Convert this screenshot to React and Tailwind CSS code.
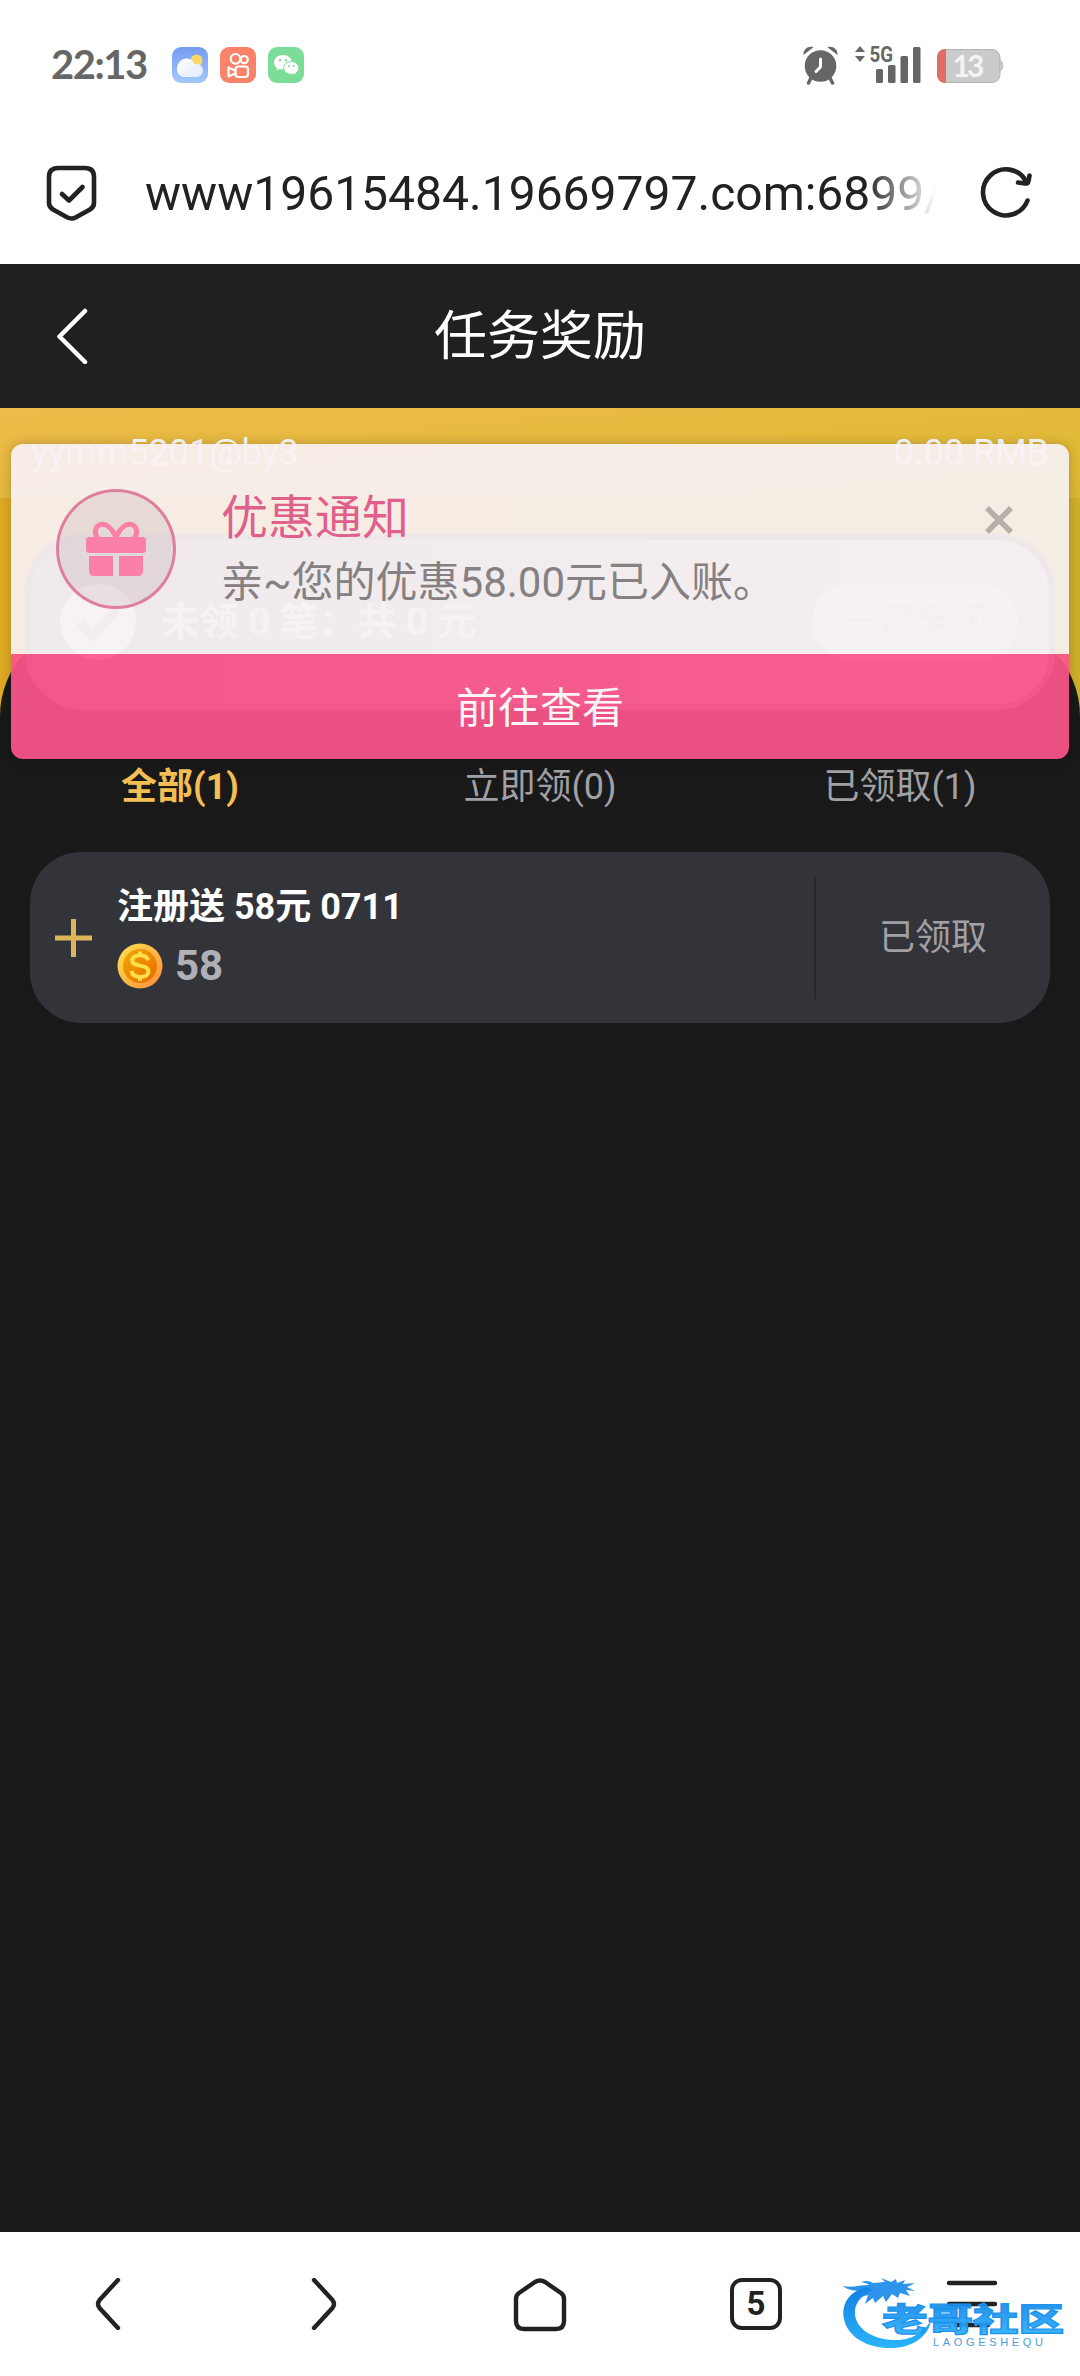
import React from "react";

function StatusBar() {
  return (
    <div className="flex h-[132px] items-start pl-[51px] pr-[76px] text-[#666]">
      <div className="mt-[39px] w-[121px] whitespace-nowrap font-['Lato'] text-[40px] font-bold leading-[50px] tracking-[-1.5px]">22:13</div>
      <div className="mt-[47px] flex gap-3">
        <svg width="36" height="36" viewBox="0 0 36 36">
          <defs>
            <linearGradient id="sky" x1="0" y1="0" x2="0" y2="1">
              <stop offset="0" stopColor="#759bf5" />
              <stop offset="1" stopColor="#a3c8f8" />
            </linearGradient>
            <linearGradient id="cloud" x1="0" y1="0" x2="1" y2="1">
              <stop offset="0" stopColor="#fff" />
              <stop offset="1" stopColor="#dfeafc" />
            </linearGradient>
          </defs>
          <rect width="36" height="36" rx="9" fill="url(#sky)" />
          <circle cx="24.5" cy="13.5" r="6" fill="#fbd565" />
          <path d="M12 30a7 7 0 0 1-7-7.500C5 15 10 11.500 14.500 11.500c4 0 6.800 2.200 8 5.500H25a6 6.500 0 0 1 0 13Z" fill="url(#cloud)" />
        </svg>
        <svg width="36" height="36" viewBox="0 0 36 36" fill="none" stroke="#fff" strokeWidth="2.200">
          <rect width="36" height="36" rx="9" fill="#fa8268" stroke="none" />
          <circle cx="15.500" cy="11.800" r="4.800" />
          <circle cx="24.200" cy="12.600" r="3.600" />
          <rect x="15.500" y="19.500" width="12.500" height="10.500" rx="3" />
          <path d="M15 23.500 8.500 20.500v9L15 26.500" strokeLinejoin="round" />
        </svg>
        <svg width="36" height="36" viewBox="0 0 36 36">
          <rect width="36" height="36" rx="9" fill="#7bdd98" />
          <path d="M15 8c-5 0-9 3.200-9 7.400 0 2.300 1.300 4.200 3.200 5.500l-.8 2.600 3.200-1.500c1.100.3 2.200.5 3.400.5 5 0 8.800-3.200 8.800-7.100S20 8 15 8Z" fill="#fff" />
          <path d="M23.300 14.600c-4.300 0-7.600 2.800-7.600 6.400s3.300 6.400 7.600 6.400c.9 0 1.800-.1 2.600-.4l2.500 1.300-.6-2.300c1.900-1.200 3-3 3-5 0-3.600-3.200-6.400-7.500-6.400Z" fill="#fff" stroke="#7bdd98" strokeWidth="1" />
          <g fill="#7bdd98">
            <circle cx="12" cy="13.200" r="1.200" />
            <circle cx="18" cy="13.200" r="1.200" />
            <circle cx="20.700" cy="19" r="1" />
            <circle cx="25.700" cy="19" r="1" />
          </g>
        </svg>
      </div>
      <div className="ml-auto mt-[46px] flex">
        <svg width="38" height="39" viewBox="0 0 38 39" fill="#666">
          <circle cx="18.500" cy="20" r="15.800" />
          <path d="M1.500 9C1 4 5.500-.5 11.500 1.200Z M35.500 9C36 4 31.500-.5 25.500 1.200Z" />
          <path d="m9 32-2.500 5M28 32l2.500 5" stroke="#666" strokeWidth="3.500" strokeLinecap="round" />
          <path d="M18.500 13v8l-4.500 4.500" fill="none" stroke="#fff" strokeWidth="3" strokeLinecap="round" strokeLinejoin="round" />
        </svg>
        <svg className="ml-[14px] overflow-visible" width="68" height="38" viewBox="0 0 68 38" fill="#666">
          <path d="M1 6 6 0l5 6ZM1 10h10l-5 6Z" />
          <rect x="22" y="23" width="7" height="14" rx="1.500" />
          <rect x="34" y="19" width="7.500" height="18" rx="1.500" />
          <rect x="46.500" y="10" width="7.500" height="27" rx="1.500" />
          <rect x="59" y="1" width="7.500" height="36" rx="1.500" />
          <text x="15.500" y="16.200" fontFamily="Roboto" fontWeight="700" fontSize="22" textLength="23.500" lengthAdjust="spacingAndGlyphs">5G</text>
        </svg>
        <svg className="ml-[15px]" width="67" height="38" viewBox="0 0 67 38">
          <defs>
            <clipPath id="cell"><rect x="0" y="3" width="63.500" height="34" rx="8" /></clipPath>
          </defs>
          <rect x="0.500" y="3.500" width="62.500" height="33" rx="8" fill="#cbcbcb" stroke="#b2b2b2" />
          <path d="M63 14q3 1 3 5.500T63 25Z" fill="#cbcbcb" stroke="#b5b5b5" strokeWidth=".6" />
          <rect x="0" y="3" width="9" height="34" fill="#e16d66" clipPath="url(#cell)" />
          <text x="31.500" y="31" textAnchor="middle" fontFamily="Lato" fontWeight="700" fontSize="30" fill="#f4f4f4" textLength="32">13</text>
        </svg>
      </div>
    </div>
  );
}

function AddressBar() {
  return (
    <div className="flex h-[132px] items-center pb-[22px] pl-[46px] pr-[48px]">
      <svg className="mt-[12px]" width="51" height="56" viewBox="0 0 51 56" fill="none" stroke="#222" strokeWidth="4.600" strokeLinecap="round" strokeLinejoin="round">
        <path d="M12 3h27q9 0 9 9v26q0 4-4 6.500L30 52.300q-4.500 2.400-9 0L7 44.500Q3 42 3 38V12q0-9 9-9Z" />
        <path d="m16 29 7 6.500L36.500 22" />
      </svg>
      <div className="ml-[48px] mt-[13px] h-[60px] w-[791px] whitespace-nowrap font-['Roboto'] text-[48px] leading-[60px] text-[#222] [mask-image:linear-gradient(to_right,#000_91%,transparent_100%)]">
        www19615484.19669797.com:6899/
      </div>
      <svg className="ml-[44px] mt-[9px]" width="52" height="52" viewBox="0 0 52 52" fill="none" stroke="#222" strokeWidth="4.600" strokeLinecap="round" strokeLinejoin="round">
        <path d="M47.500 34.500A23 23 0 1 1 46 15" />
        <path d="M49.500 9.500 48.500 15q-.5 3-3.500 2.500L38 16.500" />
      </svg>
    </div>
  );
}

function Coin() {
  return (
    <svg width="46" height="46" viewBox="0 0 46 46">
      <defs>
        <linearGradient id="rim" x1="0" y1="0" x2="1" y2="1">
          <stop offset="0" stopColor="#ffe24d" />
          <stop offset="1" stopColor="#ff8d3c" />
        </linearGradient>
        <linearGradient id="face" x1="0" y1="0" x2="1" y2="1">
          <stop offset="0" stopColor="#f0a800" />
          <stop offset="1" stopColor="#ec6a00" />
        </linearGradient>
      </defs>
      <circle cx="23" cy="23" r="22.500" fill="url(#rim)" />
      <circle cx="23" cy="23" r="17" fill="url(#face)" />
      <path d="M31 17.500c-.6-3.500-3.800-5.300-8-5.300-4.500 0-7.800 2-7.800 5.200 0 3.600 3.500 4.400 7.800 5.200 4.600.9 8.400 1.900 8.400 5.800 0 3.500-3.600 5.500-8.400 5.500-4.600 0-8-2-8.500-5.800M23 8.500v3.700M23 34v3.700" fill="none" stroke="#ffe04a" strokeWidth="4" />
    </svg>
  );
}

function Notice() {
  return (
    <div className="absolute left-[11px] top-[180px] z-10 h-[315px] w-[1058px] overflow-hidden rounded-[12px] shadow-[0_0_12px_rgba(0,0,0,0.22)]">
      <div className="flex h-[210px] bg-[#f8f1f3]/93 pl-[45px] pr-[56px]">
        <div className="mt-[45px] flex size-[120px] items-center justify-center rounded-full border-3 border-[#dc6f95]/85 bg-[#b09090]/20">
          <svg width="60" height="56" viewBox="0 0 60 56" fill="#fa80a8">
            <rect x="0" y="16" width="60" height="16" rx="3.500" />
            <path d="M3 35h24v20H8q-5 0-5-5ZM33 35h24v15q0 5-5 5H33Z" />
            <path d="M30 16C25 6 21 3 16.500 3.200 8 3.700 8 13 12 17M30 16C35 6 39 3 43.500 3.200 52 3.700 52 13 48 17" fill="none" stroke="#fa80a8" strokeWidth="5" />
          </svg>
        </div>
        <div className="ml-[45px] mt-[42px]">
          <div className="text-[47px] leading-[64px] text-[#e0608c]">优惠通知</div>
          <div className="mt-px text-[42px] leading-[64px] text-[#858182]">亲~您的优惠58.00元已入账。</div>
        </div>
        <svg className="ml-auto mt-[62px]" width="28" height="28" viewBox="0 0 28 28" stroke="#b5afac" strokeWidth="5.500"><path d="m2 2 24 24M26 2 2 26" /></svg>
      </div>
      <div className="flex h-[105px] items-center justify-center bg-[#fb558b]/93 pt-[3px] text-[42px] text-white/95">前往查看</div>
    </div>
  );
}

function Summary() {
  return (
    <div className="mx-[25px] flex h-[176px] items-center rounded-[58px] border-[6px] border-[#6d6d6d] bg-linear-to-r from-[#8a888a] to-[#cfcbcc] pl-[29px] pr-[31px] font-bold">
      <svg width="76" height="76" viewBox="0 0 76 76"><circle cx="38" cy="38" r="38" fill="#f4f4f4" /><path d="m20 38 13 13 24-25" fill="none" stroke="#b4b0b0" strokeWidth="9" /></svg>
      <div className="ml-[25px] text-[39px] tracking-[-0.2px] text-[#f0f0f0]">未领 0 笔：共 0 元</div>
      <div className="ml-auto flex h-[76px] w-[206px] items-center justify-center rounded-full bg-[#f2f2f2] text-[36px] text-[#d4cfcf]">一键全领</div>
    </div>
  );
}

function Tabs() {
  return (
    <div className="mt-[41px] grid h-[72px] grid-cols-3 items-center text-center text-[36px] text-[#a0a0a5]">
      <div className="font-bold text-[#f3bf52]">全部(1)</div>
      <div>立即领(0)</div>
      <div>已领取(1)</div>
    </div>
  );
}

function Reward() {
  return (
    <div className="mx-[30px] mt-[29px] flex h-[171px] items-center rounded-[51px] bg-[#33343a]">
      <svg className="ml-[25px]" width="37" height="38" viewBox="0 0 37 38" stroke="#dcb45c" strokeWidth="5"><path d="M0 19h37M18.500 0v38" /></svg>
      <div className="ml-[25px] flex-1">
        <div className="text-[36px] font-bold leading-[48px] text-white">注册送 58元 0711</div>
        <div className="mt-[8px] flex h-[54px] items-center gap-[12px] text-[42px] font-bold text-[#b0b0b8]">
          <Coin />
          <span>58</span>
        </div>
      </div>
      <div className="flex h-[123px] w-[236px] items-center justify-center border-l-2 border-[#27282b] text-[36px] text-[#a0a0a5]">已领取</div>
    </div>
  );
}

// Dragon emblem followed by the community name
function Watermark() {
  return (
    <div className="absolute left-[836px] top-[38px] h-[90px] w-[234px]">
      <svg width="234" height="90" viewBox="0 0 234 90">
        <defs>
          <linearGradient id="water" x1="0" y1="0" x2="0" y2="1">
            <stop offset="0" stopColor="#0f7fe4" />
            <stop offset="1" stopColor="#2db4fa" />
          </linearGradient>
        </defs>
        <path d="M30 17C13 22 5 34 8 49c4 19 25 30 49 29 21-1 35-12 38-27-9 13-21 20-38 19-21-1-36-11-38-25C18 33 25 25 38 20Z" fill="url(#water)" />
        <path d="M7 16c9 2 16-1 26-1-2-2-5-2-8-3 5-2 9-1 12 1l12-1-4-4 10 4 5-3 1 4 8-3-2 4 12-1-8 4 8 4-9-1 4 6-10-3-2 5-6-4-6 8-3-6-8 7-2-5-8 6 3-9-7 2 2-5C20 20 12 21 7 16Z" fill="#1787e8" opacity=".9" />
        <text x="46" y="61" fontFamily="'Noto Sans CJK SC', sans-serif" fontWeight="900" fontSize="32" fill="url(#water)" fillOpacity=".92" stroke="#1c93ee" strokeWidth="1.200" textLength="182" lengthAdjust="spacingAndGlyphs">老哥社区</text>
        <text x="97" y="76" fontFamily="'Liberation Sans', sans-serif" fontSize="11" fill="#4a9dde" textLength="110">LAOGESHEQU</text>
      </svg>
    </div>
  );
}

function BrowserNav() {
  const stroke = { fill: "none", stroke: "#222", strokeWidth: 4.4, strokeLinecap: "round", strokeLinejoin: "round" };
  return (
    <div className="relative grid h-[144px] grid-cols-5 items-start justify-items-center bg-white pt-[46px]">
      <svg width="52" height="52" viewBox="0 0 52 52" {...stroke}><path d="M36 2 18 21.500q-4 4.500 0 9L36 50" /></svg>
      <svg width="52" height="52" viewBox="0 0 52 52" {...stroke}><path d="m16 2 18 19.500q4 4.500 0 9L16 50" /></svg>
      <svg width="54" height="54" viewBox="0 0 54 54" {...stroke}><path d="M3 21q0-4 3-6L22 4q5-3 10 0l16 11q3 2 3 6v22q0 8-8 8H11q-8 0-8-8Z" /></svg>
      <div className="flex size-[52px] items-center justify-center rounded-[12px] border-[4.500px] border-[#222] text-[33px] font-bold text-[#222]">5</div>
      <svg width="52" height="52" viewBox="0 0 52 52" {...stroke}><path d="M3 5h46M3 26h46M10 47h32" /></svg>
      <Watermark />
    </div>
  );
}

export default function App() {
  return (
    <div className="flex h-[2376px] w-[1080px] flex-col bg-white font-['Roboto','Noto_Sans_CJK_SC',sans-serif]">
      <StatusBar />
      <AddressBar />
      <main className="relative flex-1 overflow-hidden bg-[#191919]">
        <header className="grid h-[144px] grid-cols-3 items-center bg-[#202020] text-white">
          <svg className="ml-[56px]" width="32" height="56" viewBox="0 0 32 56" fill="none" stroke="#fff" strokeWidth="4.500" strokeLinecap="round" strokeLinejoin="round"><path d="M29 3 3.500 28.500 29 54" /></svg>
          <h1 className="pt-[3px] text-center text-[53px]">任务奖励</h1>
        </header>
        <div className="h-[320px] bg-linear-to-r from-[#dfaa24] to-[#cfb027]">
          <div className="flex h-[90px] items-center justify-between bg-linear-to-br from-[#edbb48] to-[#dcb931] px-[31px] text-[36px] text-white">
            <span>yymm5201@by3</span>
            <span>0.00 RMB</span>
          </div>
          <div className="mt-[125px] h-[105px] rounded-t-[93px] bg-[#191919]" />
        </div>
        <div className="mt-[-194px]">
          <Summary />
          <Tabs />
          <Reward />
        </div>
        <Notice />
      </main>
      <BrowserNav />
    </div>
  );
}
